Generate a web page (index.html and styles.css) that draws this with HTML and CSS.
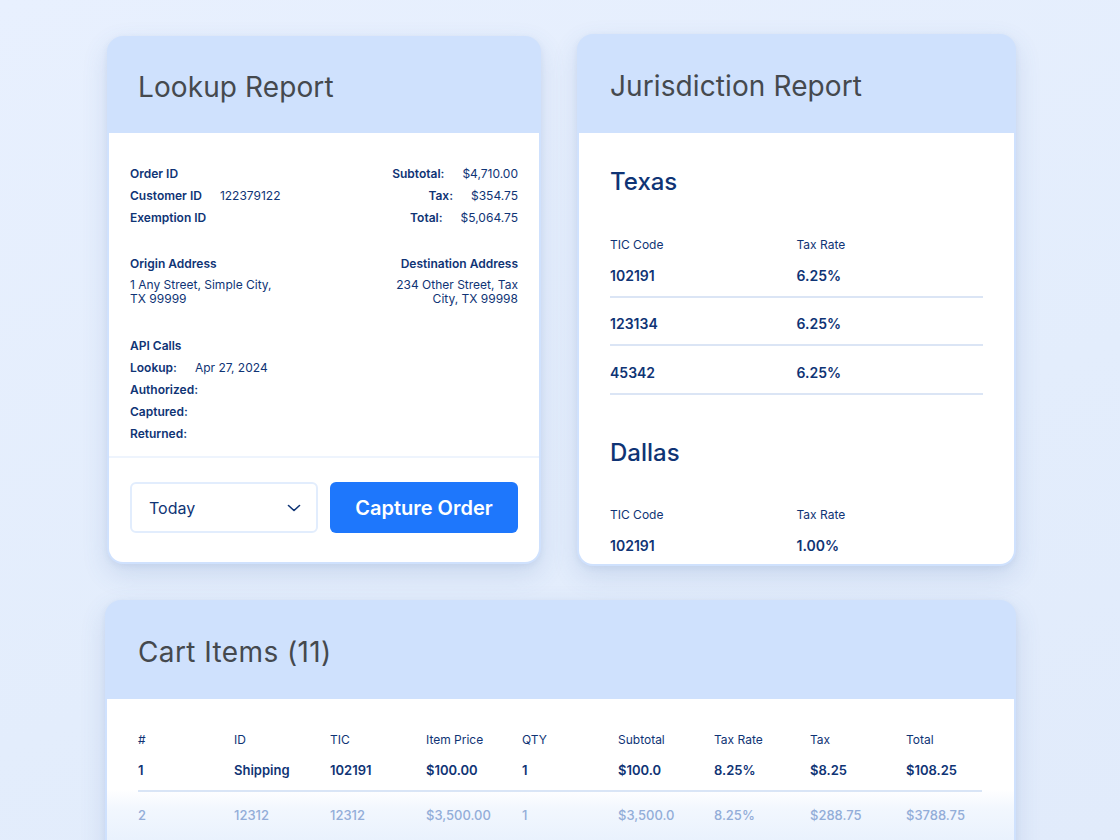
FILE: index.html
```html
<!DOCTYPE html>
<html lang="en">
<head>
<meta charset="utf-8">
<title>Reports</title>
<link rel="stylesheet" href="styles.css">
</head>
<body>
<main class="page">
  <section class="card lookup">
    <header class="card-head">Lookup Report</header>
    <div class="card-body lookup-body">
      <div class="lookup-main">
        <div class="split">
          <div class="col">
            <div class="line"><span class="lbl">Order ID</span></div>
            <div class="line"><span class="lbl">Customer ID</span><span class="val">122379122</span></div>
            <div class="line"><span class="lbl">Exemption ID</span></div>
          </div>
          <div class="col col-right">
            <div class="line"><span class="lbl">Subtotal:</span><span class="val">$4,710.00</span></div>
            <div class="line"><span class="lbl">Tax:</span><span class="val">$354.75</span></div>
            <div class="line"><span class="lbl">Total:</span><span class="val">$5,064.75</span></div>
          </div>
        </div>
        <div class="split addr">
          <div class="col">
            <div class="line"><span class="lbl">Origin Address</span></div>
            <p class="address">1 Any Street, Simple City, TX 99999</p>
          </div>
          <div class="col col-right">
            <div class="line"><span class="lbl">Destination Address</span></div>
            <p class="address address-right">234 Other Street, Tax City, TX 99998</p>
          </div>
        </div>
        <div class="col api">
          <div class="line"><span class="lbl">API Calls</span></div>
          <div class="line"><span class="lbl">Lookup:</span><span class="val">Apr 27, 2024</span></div>
          <div class="line"><span class="lbl">Authorized:</span></div>
          <div class="line"><span class="lbl">Captured:</span></div>
          <div class="line"><span class="lbl">Returned:</span></div>
        </div>
      </div>
      <div class="lookup-foot">
        <div class="select">
          <span>Today</span>
          <svg width="14" height="8" viewBox="0 0 14 8" fill="none"><path d="M1.5 1.5 7 6.5l5.5-5" stroke="#0f3475" stroke-width="1.6" stroke-linecap="round" stroke-linejoin="round"/></svg>
        </div>
        <button class="btn">Capture Order</button>
      </div>
    </div>
  </section>

  <section class="card juris">
    <header class="card-head">Jurisdiction Report</header>
    <div class="card-body juris-body">
      <h2 class="place">Texas</h2>
      <div class="jgrid jhead"><span>TIC Code</span><span>Tax Rate</span></div>
      <div class="jgrid jrow"><span>102191</span><span>6.25%</span></div>
      <div class="jgrid jrow"><span>123134</span><span>6.25%</span></div>
      <div class="jgrid jrow"><span>45342</span><span>6.25%</span></div>
      <h2 class="place place-next">Dallas</h2>
      <div class="jgrid jhead jhead-next"><span>TIC Code</span><span>Tax Rate</span></div>
      <div class="jgrid jrow jlast"><span>102191</span><span>1.00%</span></div>
    </div>
  </section>

  <section class="card cart">
    <header class="card-head">Cart Items (11)</header>
    <div class="card-body cart-body">
      <div class="cgrid chead">
        <span>#</span><span>ID</span><span>TIC</span><span>Item Price</span><span>QTY</span><span>Subtotal</span><span>Tax Rate</span><span>Tax</span><span>Total</span>
      </div>
      <div class="cgrid crow">
        <span>1</span><span>Shipping</span><span>102191</span><span>$100.00</span><span>1</span><span>$100.0</span><span>8.25%</span><span>$8.25</span><span>$108.25</span>
      </div>
      <div class="cgrid crow faded">
        <span>2</span><span>12312</span><span>12312</span><span>$3,500.00</span><span>1</span><span>$3,500.0</span><span>8.25%</span><span>$288.75</span><span>$3788.75</span>
      </div>
    </div>
  </section>
</main>
</body>
</html>
```

FILE: styles.css
```css
* { box-sizing: border-box; }

html, body {
  margin: 0;
  height: 840px;
  overflow: hidden;
}

body {
  background: linear-gradient(160deg, #e8f0fe 0%, #e3edfc 60%, #e1ebfb 100%);
  font-family: Inter, "Noto Sans", "DejaVu Sans", sans-serif;
  color: #0f3475;
}

.page {
  width: 911px;
  margin: 36px 0 0 105px;
  display: grid;
  grid-template-columns: 437px 439px;
  grid-template-rows: 528px auto;
  column-gap: 35px;
  row-gap: 36px;
}

.card {
  background: #cfe1fd;
  border-radius: 16px;
  padding: 0 2px 2px;
  display: flex;
  flex-direction: column;
  overflow: hidden;
  box-shadow: 0 10px 26px rgba(70, 105, 170, 0.16), 0 2px 6px rgba(70, 105, 170, 0.08);
}

.lookup {
  margin-left: 2px;
  margin-right: 1px;
}

.juris {
  margin-top: -2px;
  margin-bottom: -2px;
}

.cart {
  grid-column: 1 / -1;
  height: 300px;
}

.card-head {
  height: 97px;
  flex: none;
  display: flex;
  align-items: center;
  padding: 4px 0 0 29px;
  font-size: 28px;
  font-weight: 400;
  color: #45494e;
  letter-spacing: 0.1px;
}

.juris .card-head,
.cart .card-head {
  height: 99px;
  padding-left: 31px;
}

.cart .card-head {
  letter-spacing: 0.4px;
}

.card-body {
  background: #ffffff;
  border-radius: 0 0 14px 14px;
  flex: 1;
  min-height: 0;
  overflow: hidden;
}

/* Lookup */
.lookup-body {
  display: flex;
  flex-direction: column;
}

.lookup-main {
  padding: 29px 21px 12px 21px;
  border-bottom: 2px solid #eef4fd;
}

.split {
  display: flex;
  justify-content: space-between;
}

.col {
  display: flex;
  flex-direction: column;
}

.col-right {
  align-items: flex-end;
}

.line {
  display: flex;
  gap: 18px;
  height: 22px;
  align-items: center;
  font-size: 12px;
  white-space: nowrap;
}

.lbl {
  font-weight: 600;
}

.val {
  font-weight: 400;
}

.col-right .line {
  justify-content: flex-end;
}

.addr {
  margin-top: 24px;
}

.address {
  margin: 4px 0 0;
  font-size: 12px;
  line-height: 14px;
  max-width: 150px;
}

.address-right {
  text-align: right;
  max-width: 128px;
}

.api {
  margin-top: 28px;
}

.lookup-foot {
  display: flex;
  gap: 12px;
  padding: 24px 21px 0 21px;
}

.select {
  width: 188px;
  height: 51px;
  border: 2px solid #e2edfd;
  border-radius: 6px;
  display: flex;
  align-items: center;
  justify-content: space-between;
  padding: 0 15px 0 17px;
  font-size: 16px;
  color: #0f3475;
}

.btn {
  width: 188px;
  height: 51px;
  border: 0;
  border-radius: 6px;
  background: #1e77fc;
  color: #ffffff;
  font-family: inherit;
  font-size: 20px;
  font-weight: 600;
}

/* Jurisdiction */
.juris-body {
  padding: 34px 31px 0 31px;
}

.place {
  margin: 0;
  font-size: 24px;
  line-height: 30px;
  font-weight: 500;
  color: #0f3475;
}

.place-next {
  margin-top: 43px;
}

.jgrid {
  display: grid;
  grid-template-columns: 1fr 1fr;
}

.jhead {
  margin-top: 40px;
  font-size: 12px;
  line-height: 16px;
  margin-bottom: -4px;
}

.jhead-next {
  margin-top: 39px;
}

.jrow {
  padding: 16.5px 0 10px;
  line-height: 20px;
  font-size: 14px;
  font-weight: 600;
  border-bottom: 2px solid #dbe5f5;
}

.jlast {
  padding-top: 17px;
  border-bottom: 0;
}

/* Cart */
.cart-body {
  padding: 33px 31px 0;
  background: linear-gradient(180deg, #ffffff 0, #ffffff 90px, #f2f7fe 110px, #e7f0fd 150px);
}

.cgrid {
  display: grid;
  grid-template-columns: repeat(9, 96px);
  width: 844px;
}

.chead {
  font-size: 12px;
  line-height: 16px;
}

.crow {
  font-size: 13px;
  font-weight: 600;
  line-height: 20px;
  padding: 12px 0 10px;
  border-bottom: 2px solid #d9e5f6;
}

.crow.faded {
  padding-top: 13px;
  font-weight: 500;
  color: #93add8;
  border-bottom: 0;
}
```
